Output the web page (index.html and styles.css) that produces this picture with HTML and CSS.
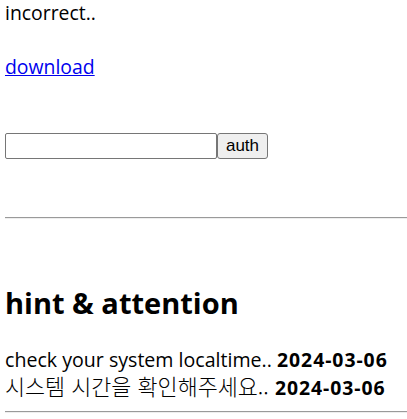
FILE: index.html
```html
<!DOCTYPE html>
<html lang="ko">
<head>
<meta charset="utf-8">
<title>auth</title>
<link rel="stylesheet" href="styles.css">
</head>
<body>
<p class="msg">incorrect..</p>
<p class="dl"><a href="#">download</a></p>
<form class="auth">
<input class="field" type="text"><button class="btn" type="button">auth</button>
</form>
<hr class="rule">
<h1 class="title">hint &amp; attention</h1>
<p class="hint"><span class="en">check your system localtime.. </span><b class="date">2024-03-06</b><br><span class="ko">시스템 시간을 확인해주세요.. </span><b class="date">2024-03-06</b></p>
<hr class="rule last">
</body>
</html>
```
FILE: styles.css
```css
html, body {
  margin: 0;
  padding: 0;
}
body {
  padding-left: 5px;
  font-family: "Open Sans", "Noto Sans CJK KR", sans-serif;
  font-size: 19.4px;
  line-height: 25px;
  color: #000;
  background: #fff;
}
.msg {
  margin: 0;
}
.dl {
  margin: 29px 0 0 0;
}
.dl a {
  color: #0000ee;
}
.auth {
  margin: 54px 0 0 0;
  display: flex;
  height: 26px;
}
.field {
  box-sizing: border-box;
  width: 212px;
  height: 26px;
  margin: 0;
  border: 1px solid #767676;
  border-radius: 2px;
  padding: 0 3px;
  font-size: 16px;
}
.btn {
  box-sizing: border-box;
  width: 51px;
  height: 26px;
  margin: 0;
  padding: 0;
  border: 1px solid #767676;
  border-radius: 3px;
  background: #efefef;
  font-family: "Liberation Sans", Arial, sans-serif;
  font-size: 17px;
  color: #000;
}
.rule {
  margin: 58px 0 0 0;
  border: 0;
  border-top: 1px solid #9a9a9a;
  border-bottom: 1px solid #eeeeee;
  height: 0;
}
.title {
  margin: 66px 0 0 0;
  font-size: 29px;
  line-height: 36px;
  font-weight: 700;
}
.hint {
  margin: 26px 0 0 0;
  line-height: 26px;
}
.en {
  font-size: 19.6px;
}
.ko {
  font-family: "Noto Sans CJK KR", sans-serif;
  font-size: 21.8px;
  font-weight: 300;
}
.date {
  font-weight: 700;
  letter-spacing: 0.95px;
}
.rule.last {
  margin-top: 10px;
}
```
